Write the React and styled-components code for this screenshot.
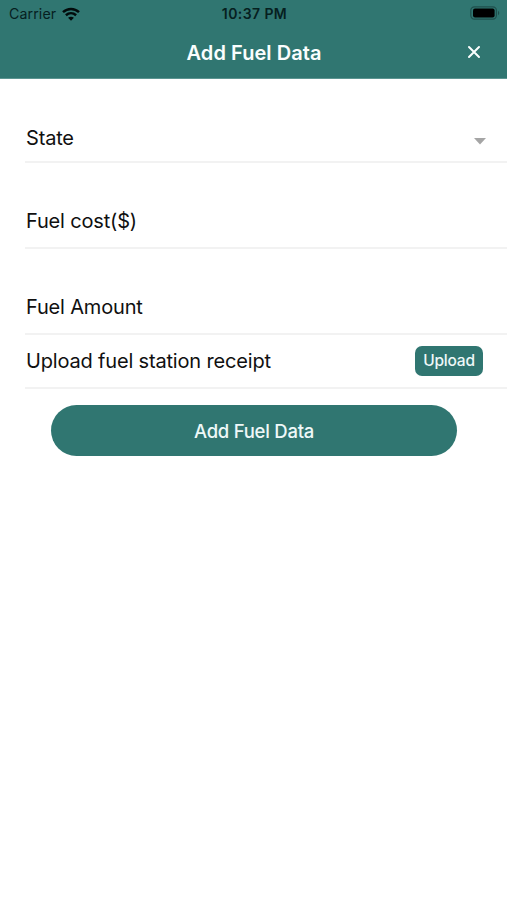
import styled, { createGlobalStyle } from 'styled-components';

const GlobalStyle = createGlobalStyle`
    body {
        margin: 0;
        background: #fff;
        font-family: Inter, "Liberation Sans", sans-serif;
    }

    *, *::before, *::after {
        box-sizing: border-box;
    }
`;

const Screen = styled.div`
    display: flex;
    flex-direction: column;
    min-height: 900px;
    background: #fff;
`;

const Header = styled.header`
    height: 79px;
    background: #307671;
    border-bottom: 1px solid #5b9591;
`;

const StatusBar = styled.div`
    display: grid;
    grid-template-columns: 1fr auto 1fr;
    align-items: center;
    height: 26px;
    padding: 0 7px 0 9px;
    color: #06201f;
`;

const Carrier = styled.div`
    display: flex;
    align-items: center;
    gap: 6px;
    padding-top: 1px;
    font-size: 14.2px;
    line-height: 19px;
    letter-spacing: 0.1px;
`;

const Clock = styled.div`
    padding-top: 2px;
    font-size: 14px;
    font-weight: 600;
    line-height: 18px;
    letter-spacing: 0.4px;
`;

const Battery = styled.svg`
    justify-self: end;
`;

const TitleBar = styled.div`
    display: grid;
    grid-template-columns: 1fr auto 1fr;
    align-items: center;
    height: 52px;
    padding: 0 26px 0 27px;
    color: #fafefe;
`;

const Title = styled.h1`
    grid-column: 2;
    margin: 0;
    padding-top: 2px;
    font-size: 20px;
    font-weight: 600;
    line-height: 24px;
    letter-spacing: 0.05px;
    white-space: nowrap;
`;

const CloseButton = styled.button`
    justify-self: end;
    display: flex;
    padding: 0;
    border: none;
    background: none;
    color: inherit;
`;

const Form = styled.main`
    display: flex;
    flex-direction: column;
    padding-left: 25px;
`;

const Row = styled.div`
    display: flex;
    align-items: ${({ $align }) => $align || 'flex-end'};
    justify-content: space-between;
    height: ${({ $height }) => $height}px;
    padding: 0 24px ${({ $bottom }) => $bottom}px 1px;
    border-bottom: 2px solid #f2f2f2;
`;

const Label = styled.label`
    font-size: 20px;
    line-height: 24px;
    letter-spacing: -0.17px;
    color: #101010;
    white-space: nowrap;
`;

const Caret = styled.svg`
    margin: 0 -3px 5px 0;
`;

const UploadButton = styled.button`
    width: 68px;
    height: 30px;
    padding: 0;
    border: none;
    border-radius: 7px;
    background: #307671;
    color: #eef8f8;
    font: 500 15.5px/30px Inter, "Liberation Sans", sans-serif;
    letter-spacing: -0.2px;
`;

const SubmitButton = styled.button`
    width: 406px;
    height: 51px;
    margin: 16px 0 0 26px;
    padding: 1px 0 0;
    border: none;
    border-radius: 26px;
    background: #307671;
    color: #eef8f8;
    font: 500 18.5px/50px Inter, "Liberation Sans", sans-serif;
    letter-spacing: -0.25px;
`;

function WifiIcon() {
    return (
        <svg width="18" height="14" viewBox="0 0 18 14" fill="none" stroke="#020b0b" strokeWidth="2.5">
            <path d="M1 5.1C5.6 .8 12.4 .8 17 5.1" />
            <path d="M3.9 8.2c3-2.7 7.2-2.7 10.2 0" />
            <path d="M9 13.7L6.1 10.8c1.7-1.5 4.1-1.5 5.8 0z" fill="#020b0b" stroke="none" />
        </svg>
    );
}

function BatteryIcon() {
    return (
        <Battery width="30" height="14" viewBox="0 0 30 14">
            <rect x=".8" y=".8" width="25.6" height="12.4" rx="3.6" fill="none" stroke="#1f504d" strokeWidth="1.2" />
            <rect x="3" y="2.6" width="21.6" height="8.8" rx="2" fill="#000" />
            <path d="M28 4.8c1.7.8 1.7 3.6 0 4.4z" fill="#1f504d" />
        </Battery>
    );
}

function App() {
    return (
        <Screen>
            <GlobalStyle />
            <Header>
                <StatusBar>
                    <Carrier>
                        Carrier
                        <WifiIcon />
                    </Carrier>
                    <Clock>10:37 PM</Clock>
                    <BatteryIcon />
                </StatusBar>
                <TitleBar>
                    <Title>Add Fuel Data</Title>
                    <CloseButton aria-label="Close">
                        <svg width="14" height="14" viewBox="0 0 14 14" stroke="currentColor" strokeWidth="2" strokeLinecap="round">
                            <path d="M2 2l10 10M12 2L2 12" />
                        </svg>
                    </CloseButton>
                </TitleBar>
            </Header>
            <Form>
                <Row $height={84} $bottom={11}>
                    <Label>State</Label>
                    <Caret width="12" height="7" viewBox="0 0 12 7">
                        <path d="M0 0h12L6 6.6z" fill="#a5a5a5" />
                    </Caret>
                </Row>
                <Row $height={86} $bottom={14}>
                    <Label>Fuel cost($)</Label>
                </Row>
                <Row $height={86} $bottom={14}>
                    <Label>Fuel Amount</Label>
                </Row>
                <Row $height={54} $bottom={0} $align="center">
                    <Label>Upload fuel station receipt</Label>
                    <UploadButton>Upload</UploadButton>
                </Row>
                <SubmitButton>Add Fuel Data</SubmitButton>
            </Form>
        </Screen>
    );
}

export default App;
